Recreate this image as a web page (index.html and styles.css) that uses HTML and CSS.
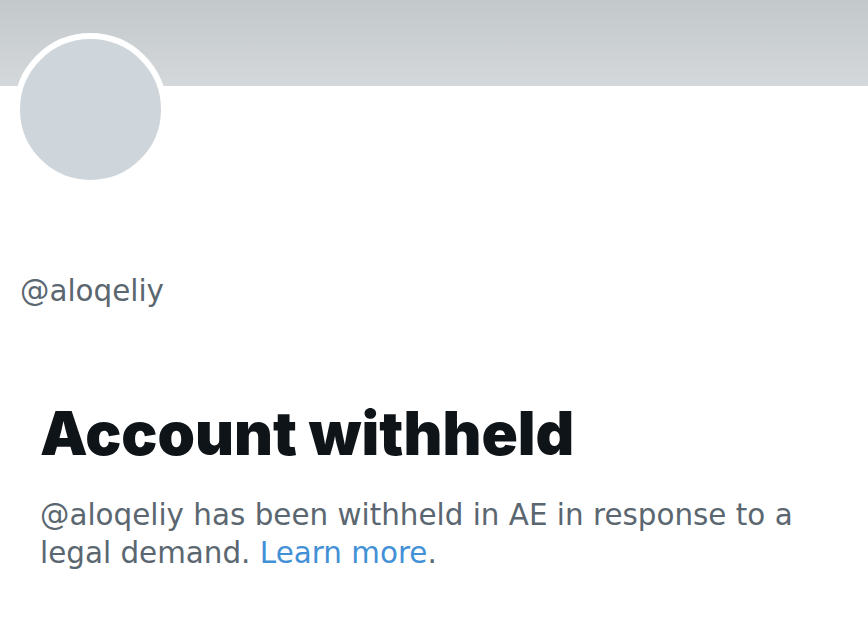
FILE: index.html
```html
<!DOCTYPE html>
<html>
<head>
<meta charset="utf-8">
<link rel="stylesheet" href="styles.css">
</head>
<body>
<div class="page">
  <div class="banner"></div>
  <div class="avatar-row"><div class="avatar"></div></div>
  <div class="handle">@aloqeliy</div>
  <div class="notice">
    <h1 class="title">Account withheld</h1>
    <p class="desc">@aloqeliy has been withheld in AE in response to a legal demand. <a class="link" href="#">Learn more</a>.</p>
  </div>
</div>
</body>
</html>
```
FILE: styles.css
```css
html, body {
  margin: 0;
  padding: 0;
  background: #ffffff;
}
.page {
  width: 868px;
  height: 619px;
  overflow: hidden;
  font-family: "DejaVu Sans", "Open Sans", sans-serif;
}
.banner {
  height: 86px;
  background: linear-gradient(180deg, #c3c8cb 0%, #d4d8db 100%);
}
.avatar-row {
  display: flow-root;
  padding-left: 14px;
  height: 96px;
}
.avatar {
  width: 141px;
  height: 141px;
  margin-top: -53px;
  border: 6px solid #ffffff;
  border-radius: 50%;
  background: #cfd6db;
}
.handle {
  margin-top: 93px;
  padding-left: 20px;
  font-size: 29.4px;
  line-height: 32px;
  color: #5b6770;
}
.notice {
  padding: 0 40px;
  margin-top: 91px;
}
.title {
  margin: 0;
  font-family: Inter, Roboto, sans-serif;
  font-weight: 900;
  font-size: 60px;
  line-height: 70px;
  letter-spacing: 0;
  color: #0f1419;
}
.desc {
  margin: 28px 0 0;
  font-size: 29.4px;
  line-height: 38px;
  color: #5b6770;
}
.link {
  color: #4290d6;
  text-decoration: none;
}
```
